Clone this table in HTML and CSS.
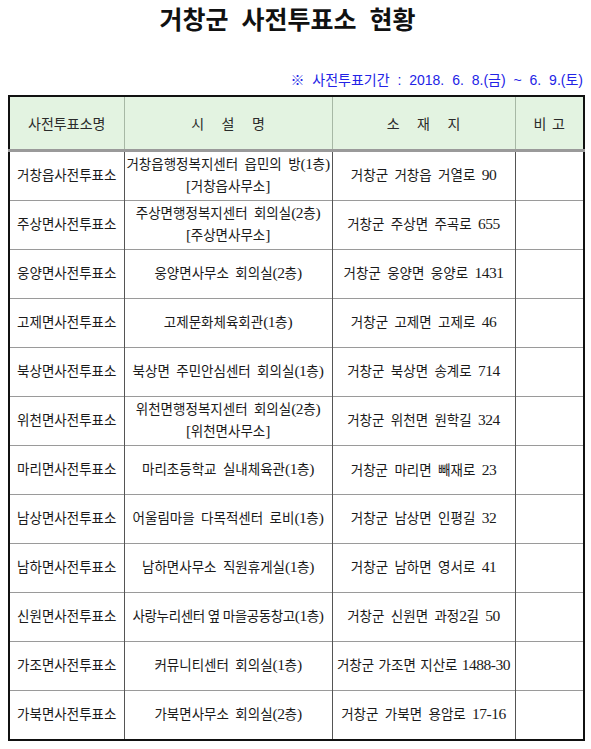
FILE: index.html
```html
<!DOCTYPE html>
<html lang="ko">
<head>
<meta charset="utf-8">
<title>거창군 사전투표소 현황</title>
<link rel="stylesheet" href="styles.css">
</head>
<body>
<div class="page">
  <h1 class="title">거창군 사전투표소 현황</h1>
  <p class="period">※ 사전투표기간 : 2018. 6. 8.(금) ~ 6. 9.(토)</p>
  <table class="list">
    <colgroup>
      <col class="c1"><col class="c2"><col class="c3"><col class="c4">
    </colgroup>
    <thead>
      <tr>
        <th>사전투표소명</th>
        <th class="spread">시 설 명</th>
        <th class="spread">소 재 지</th>
        <th class="spread2">비 고</th>
      </tr>
    </thead>
    <tbody>
      <tr><td>거창읍사전투표소</td><td>거창읍행정복지센터 읍민의 방<span class="n">(1</span>층<span class="n">)</span><br><span class="n">[</span>거창읍사무소<span class="n">]</span></td><td>거창군 거창읍 거열로 <span class="n">90</span></td><td></td></tr>
      <tr><td>주상면사전투표소</td><td>주상면행정복지센터 회의실<span class="n">(2</span>층<span class="n">)</span><br><span class="n">[</span>주상면사무소<span class="n">]</span></td><td>거창군 주상면 주곡로 <span class="n">655</span></td><td></td></tr>
      <tr><td>웅양면사전투표소</td><td>웅양면사무소 회의실<span class="n">(2</span>층<span class="n">)</span></td><td>거창군 웅양면 웅양로 <span class="n">1431</span></td><td></td></tr>
      <tr><td>고제면사전투표소</td><td>고제문화체육회관<span class="n">(1</span>층<span class="n">)</span></td><td>거창군 고제면 고제로 <span class="n">46</span></td><td></td></tr>
      <tr><td>북상면사전투표소</td><td>북상면 주민안심센터 회의실<span class="n">(1</span>층<span class="n">)</span></td><td>거창군 북상면 송계로 <span class="n">714</span></td><td></td></tr>
      <tr><td>위천면사전투표소</td><td>위천면행정복지센터 회의실<span class="n">(2</span>층<span class="n">)</span><br><span class="n">[</span>위천면사무소<span class="n">]</span></td><td>거창군 위천면 원학길 <span class="n">324</span></td><td></td></tr>
      <tr><td>마리면사전투표소</td><td>마리초등학교 실내체육관<span class="n">(1</span>층<span class="n">)</span></td><td>거창군 마리면 <span class="k">빼</span>재로 <span class="n">23</span></td><td></td></tr>
      <tr><td>남상면사전투표소</td><td>어울림마을 다목적센터 로비<span class="n">(1</span>층<span class="n">)</span></td><td>거창군 남상면 인평길 <span class="n">32</span></td><td></td></tr>
      <tr><td>남하면사전투표소</td><td>남하면사무소 직원휴게실<span class="n">(1</span>층<span class="n">)</span></td><td>거창군 남하면 영서로 <span class="n">41</span></td><td></td></tr>
      <tr><td>신원면사전투표소</td><td class="tight">사랑누리센터 옆 마을공동창고<span class="n">(1</span>층<span class="n">)</span></td><td>거창군 신원면 과정<span class="n">2</span>길 <span class="n">50</span></td><td></td></tr>
      <tr><td>가조면사전투표소</td><td>커뮤니티센터 회의실<span class="n">(1</span>층<span class="n">)</span></td><td class="tight2">거창군 가조면 지산로 <span class="n">1488-30</span></td><td></td></tr>
      <tr><td>가북면사전투표소</td><td>가북면사무소 회의실<span class="n">(2</span>층<span class="n">)</span></td><td>거창군 가북면 용암로 <span class="n">17-16</span></td><td></td></tr>
    </tbody>
  </table>
</div>
</body>
</html>
```
FILE: styles.css
```css
html, body {
  margin: 0;
  padding: 0;
  background: #ffffff;
}

.page {
  width: 575px;
  padding: 0 8px;
  font-family: "Liberation Serif", "Noto Sans CJK KR", "Noto Sans CJK JP", serif;
  color: #1a1a1a;
}

.title {
  margin: 0;
  height: 36px;
  line-height: 36px;
  padding-right: 16px;
  text-align: center;
  font-family: "Noto Sans CJK KR", sans-serif;
  font-weight: 700;
  font-size: 25px;
  color: #111;
  word-spacing: 6px;
}

.period {
  margin: 35px 0 6px;
  line-height: 18px;
  text-align: right;
  font-family: "Liberation Sans", "Noto Sans CJK KR", sans-serif;
  font-size: 14px;
  color: #2323e6;
  word-spacing: 4px;
}

.list {
  width: 575px;
  table-layout: fixed;
  border-collapse: collapse;
  border: 2px solid #111;
  font-size: 13.5px;
}

.c1 { width: 115px; }
.c2 { width: 208px; }
.c3 { width: 183px; }
.c4 { width: 69px; }

.list th {
  height: 52px;
  padding: 0;
  background: #e3f3e1;
  font-weight: 400;
  font-size: 14px;
  color: #2a2a2a;
  border-left: 1px solid #a7b8a5;
  border-bottom: 3px solid #9a9a9a;
}

.list th:first-child { border-left: 0; }

.list th.spread { word-spacing: 14px; }
.list th.spread2 { word-spacing: 2px; }

.list td {
  height: 48px;
  padding: 0;
  text-align: center;
  line-height: 22px;
  word-spacing: 3px;
  border-left: 1px solid #555;
  border-top: 1px solid #9a9a9a;
  white-space: nowrap;
}

.list td:first-child { border-left: 0; }

.list td.tight { letter-spacing: -0.4px; word-spacing: 0; }
.list td.tight2 { word-spacing: 1px; }

.n {
  font-size: 15.5px;
  letter-spacing: -0.5px;
  line-height: 1;
}

.k { font-family: "Noto Sans CJK KR", "Noto Sans CJK SC", sans-serif; }
```
